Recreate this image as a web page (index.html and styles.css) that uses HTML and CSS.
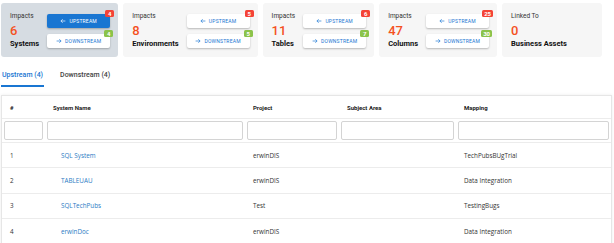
FILE: index.html
```html
<!DOCTYPE html>
<html>
<head>
<meta charset="utf-8" />
<title>Impact Analysis</title>
	<link rel="stylesheet" href="styles.css">
</head>

<body>
	<div class="summary">
		<div class="card card-active">
			<div class="card-info">
				<div class="card-label">Impacts</div>
				<div class="card-count">6</div>
				<div class="card-name">Systems</div>
			</div>
			<div class="card-actions">
				<button class="dir-btn dir-btn-active"><svg viewBox="0 0 10 10"><path d="M9 5H1.5M4.5 2L1.5 5l3 3"/></svg>Upstream<span class="badge badge-up">4</span></button>
				<button class="dir-btn"><svg viewBox="0 0 10 10"><path d="M1 5h7.5M5.5 2l3 3-3 3"/></svg>Downstream<span class="badge badge-down">4</span></button>
			</div>
		</div>
		<div class="card">
			<div class="card-info">
				<div class="card-label">Impacts</div>
				<div class="card-count">8</div>
				<div class="card-name">Environments</div>
			</div>
			<div class="card-actions">
				<button class="dir-btn"><svg viewBox="0 0 10 10"><path d="M9 5H1.5M4.5 2L1.5 5l3 3"/></svg>Upstream<span class="badge badge-up">5</span></button>
				<button class="dir-btn"><svg viewBox="0 0 10 10"><path d="M1 5h7.5M5.5 2l3 3-3 3"/></svg>Downstream<span class="badge badge-down">5</span></button>
			</div>
		</div>
		<div class="card">
			<div class="card-info">
				<div class="card-label">Impacts</div>
				<div class="card-count">11</div>
				<div class="card-name">Tables</div>
			</div>
			<div class="card-actions">
				<button class="dir-btn"><svg viewBox="0 0 10 10"><path d="M9 5H1.5M4.5 2L1.5 5l3 3"/></svg>Upstream<span class="badge badge-up">6</span></button>
				<button class="dir-btn"><svg viewBox="0 0 10 10"><path d="M1 5h7.5M5.5 2l3 3-3 3"/></svg>Downstream<span class="badge badge-down">7</span></button>
			</div>
		</div>
		<div class="card">
			<div class="card-info">
				<div class="card-label">Impacts</div>
				<div class="card-count">47</div>
				<div class="card-name">Columns</div>
			</div>
			<div class="card-actions">
				<button class="dir-btn"><svg viewBox="0 0 10 10"><path d="M9 5H1.5M4.5 2L1.5 5l3 3"/></svg>Upstream<span class="badge badge-up">25</span></button>
				<button class="dir-btn"><svg viewBox="0 0 10 10"><path d="M1 5h7.5M5.5 2l3 3-3 3"/></svg>Downstream<span class="badge badge-down">30</span></button>
			</div>
		</div>
		<div class="card card-linked">
			<div class="card-info">
				<div class="card-label">Linked To</div>
				<div class="card-count">0</div>
				<div class="card-name">Business Assets</div>
			</div>
		</div>
	</div>

	<div class="tabs">
		<div class="tab tab-active">Upstream (4)</div>
		<div class="tab">Downstream (4)</div>
	</div>

	<div class="grid-panel">
		<table class="grid">
			<colgroup>
				<col class="col-num" />
				<col class="col-name" />
				<col class="col-project" />
				<col class="col-area" />
				<col />
			</colgroup>
			<thead>
				<tr class="head-row">
					<th>#</th>
					<th>System Name</th>
					<th>Project</th>
					<th>Subject Area</th>
					<th>Mapping</th>
				</tr>
				<tr class="filter-row">
					<td><input type="text" class="filter" /></td>
					<td><input type="text" class="filter" /></td>
					<td><input type="text" class="filter" /></td>
					<td><input type="text" class="filter" /></td>
					<td><input type="text" class="filter" /></td>
				</tr>
			</thead>
			<tbody>
				<tr>
					<td>1</td>
					<td><a class="link">SQL System</a></td>
					<td>erwinDIS</td>
					<td></td>
					<td>TechPubsBUgTrial</td>
				</tr>
				<tr>
					<td>2</td>
					<td><a class="link">TABLEUAU</a></td>
					<td>erwinDIS</td>
					<td></td>
					<td>Data Integration</td>
				</tr>
				<tr>
					<td>3</td>
					<td><a class="link">SQLTechPubs</a></td>
					<td>Test</td>
					<td></td>
					<td>TestingBugs</td>
				</tr>
				<tr>
					<td>4</td>
					<td><a class="link">erwinDoc</a></td>
					<td>erwinDIS</td>
					<td></td>
					<td>Data Integration</td>
				</tr>
			</tbody>
		</table>
	</div>
</body>
</html>
```

FILE: styles.css
```css
body {
	margin: 0;
	background-color: #fff;
	font-family: Roboto, "Liberation Sans", sans-serif;
	color: #222;
}

/* summary cards */
.summary {
	display: flex;
	gap: 5px;
	padding: 3px 0 0 1px;
}
.card {
	display: flex;
	align-items: center;
	gap: 8px;
	height: 54px;
	padding: 0 8px 0 9px;
	background-color: #f6f6f6;
	border-radius: 3px;
}
.card-active {
	background-color: #d6dce2;
}
.card-linked {
	width: 100px;
	box-sizing: border-box;
}
.card-label {
	font-size: 6.5px;
	line-height: 8px;
	margin-bottom: 3px;
	color: #333;
}
.card-count {
	font-size: 13px;
	line-height: 15px;
	font-weight: 500;
	color: #f4511e;
}
.card-name {
	font-size: 7.5px;
	line-height: 9px;
	margin-top: 1px;
	font-weight: bold;
	color: #111;
	white-space: nowrap;
}
.card-actions {
	display: flex;
	flex-direction: column;
	gap: 6px;
	padding-top: 2px;
}
.dir-btn {
	position: relative;
	display: flex;
	align-items: center;
	justify-content: center;
	gap: 3px;
	width: 63px;
	height: 14px;
	padding: 0;
	border: none;
	border-radius: 2px;
	background-color: #fff;
	box-shadow: 0 1px 2px rgba(0, 0, 0, 0.25);
	font-family: Roboto, sans-serif;
	font-size: 5px;
	letter-spacing: 0.2px;
	text-transform: uppercase;
	color: #1976d2;
}
.dir-btn svg {
	width: 6px;
	height: 6px;
	fill: none;
	stroke: currentColor;
	stroke-width: 1.1;
}
.dir-btn-active {
	background-color: #1976d2;
	color: #fff;
}
.badge {
	position: absolute;
	top: -4px;
	right: -4px;
	min-width: 5px;
	height: 7px;
	padding: 0 2px;
	border-radius: 1.5px;
	font-size: 6px;
	line-height: 7px;
	font-weight: bold;
	letter-spacing: 0;
	color: #fff;
}
.badge-up {
	background-color: #f44336;
}
.badge-down {
	right: -3px;
	background-color: #8bc34a;
}

/* tabs */
.tabs {
	display: flex;
	gap: 15px;
	margin-top: 10px;
	padding-left: 1px;
}
.tab {
	padding: 4px 1px 6px;
	font-size: 7px;
	line-height: 8px;
	font-weight: 500;
	color: #444;
	border-bottom: 2px solid transparent;
}
.tab-active {
	color: #1976d2;
	border-bottom-color: #1976d2;
}

/* grid */
.grid-panel {
	margin: 8px 2px 0 1px;
	border: 1px solid #e6e6e6;
	box-shadow: 0 0 3px rgba(0, 0, 0, 0.08);
}
.grid {
	width: 100%;
	border-collapse: collapse;
	table-layout: fixed;
	font-family: "Open Sans", Roboto, sans-serif;
	font-size: 6.3px;
	color: #333;
}
.col-num { width: 43px; }
.col-name { width: 200px; }
.col-project { width: 94px; }
.col-area { width: 117px; }
.grid th {
	height: 22px;
	padding: 0 8px;
	text-align: left;
	font-family: Roboto, sans-serif;
	font-weight: bold;
	font-size: 6px;
	color: #222;
	border-bottom: 1px solid #ececec;
}
.grid td {
	height: 24.4px;
	padding: 0 8px;
	border-bottom: 1px solid #ececec;
	white-space: nowrap;
}
.filter-row td {
	height: 23px;
	padding: 0 2px;
}
.filter {
	display: block;
	width: 100%;
	height: 19px;
	box-sizing: border-box;
	border: 1px solid #d4d4d4;
	border-radius: 2px;
	background-color: #fff;
}
.link {
	padding-left: 8px;
	color: #2b7bc4;
}
```
